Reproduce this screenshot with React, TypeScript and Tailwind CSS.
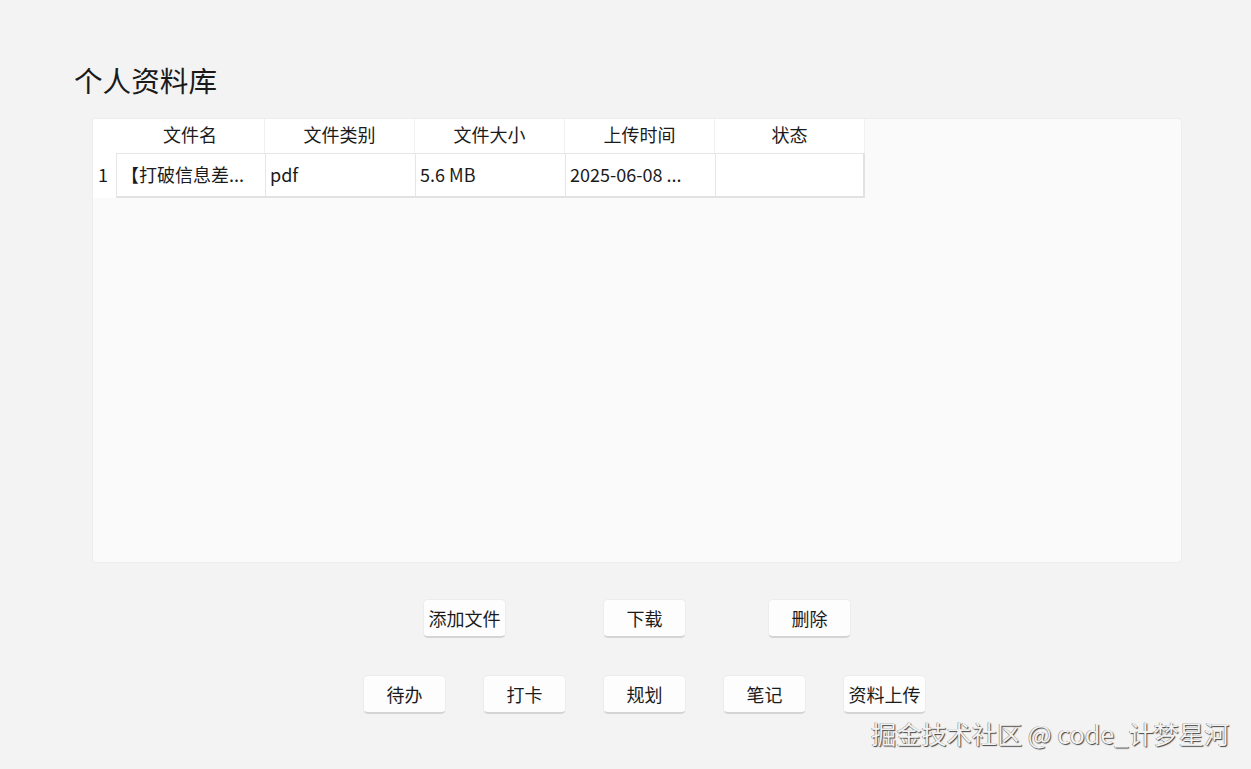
import React from "react";

const cols = ["文件名", "文件类别", "文件大小", "上传时间", "状态"];
const row = ["【打破信息差...", "pdf", "5.6 MB", "2025-06-08 ...", ""];

function Btn({ label }: { label: string }) {
  return (
    <button className="w-[83px] h-[39px] rounded-[5px] bg-[#fdfdfd] border border-[#ececec] border-b-2 border-b-[#d4d4d4] text-[18px] text-[#1b1b1b] flex items-center justify-center">
      {label}
    </button>
  );
}

export default function App() {
  return (
    <div
      className="w-[1251px] h-[769px] bg-[#f3f3f3] relative overflow-hidden"
      style={{ fontFamily: '"Noto Sans CJK SC", "Noto Sans", sans-serif' }}
    >
      <div className="pl-[74px] pt-[59px] text-[28.6px] leading-[41px] text-[#1a1a1a]">个人资料库</div>
      <div className="ml-[92px] mt-[18px] w-[1090px] h-[445px] bg-[#fafafa] rounded-[4px] border border-[#ededed] overflow-hidden">
        <div className="flex h-[34px]">
          <div className="w-[23px] bg-white" />
          {cols.map((c, i) => (
            <div
              key={c}
              className={`${i === 0 ? "w-[149px]" : "w-[150px]"} bg-white flex items-center justify-center pb-[3px] text-[18px] text-[#1b1b1b] border-r border-[#f0f0f0]`}
            >
              {c}
            </div>
          ))}
        </div>
        <div className="flex h-[45px]">
          <div className="w-[23px] bg-white flex items-center pl-[5px] pb-[2px] text-[18px] text-[#1b1b1b]">1</div>
          {row.map((c, i) => (
            <div
              key={i}
              className={`${i === 0 ? "w-[149px]" : "w-[150px]"} bg-white flex items-center px-[4px] pb-[2px] text-[18px] text-[#1b1b1b] border-t border-l border-[#e6e6e6] border-b-2 border-b-[#e2e2e2] ${i === 4 ? "border-r-2 border-r-[#e2e2e2]" : ""}`}
            >
              {c}
            </div>
          ))}
        </div>
      </div>
      <div className="flex ml-[423px] mt-[36px] gap-[97px]">
        <Btn label="添加文件" />
        <div className="flex gap-[82px]">
          <Btn label="下载" />
          <Btn label="删除" />
        </div>
      </div>
      <div className="flex ml-[363px] mt-[37px] gap-[37px]">
        {["待办", "打卡", "规划", "笔记", "资料上传"].map((l) => (
          <Btn key={l} label={l} />
        ))}
      </div>
      <div className="absolute left-[871px] top-[715px] text-[25.2px] leading-[36px] text-[#f2f2f2] [text-shadow:1px_1px_1px_#444,-0.5px_-0.5px_0.5px_#777]">
        掘金技术社区 @ code_计梦星河
      </div>
    </div>
  );
}
